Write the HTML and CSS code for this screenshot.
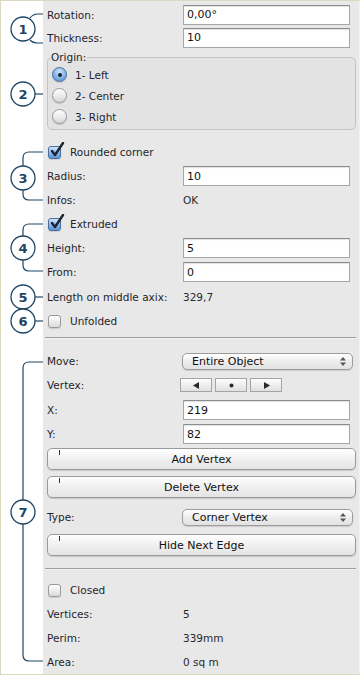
FILE: index.html
```html
<!DOCTYPE html>
<html lang="en">
<head>
  <meta charset="UTF-8">
  <title>Shape Properties</title>
  <link rel="stylesheet" href="styles.css">
</head>
<body>
  <div class="frame">
    <svg class="callouts" width="42" height="673" viewBox="0 0 42 673">
      <g class="lines">
        <path d="M29 17 Q32 13 37 13 H44"/>
        <path d="M29 39 Q32 42 37 42 H44"/>
        <path d="M34 93 H44"/>
        <path d="M44 151 H28 Q22 151 22 157 V165"/>
        <path d="M22 189 V193 Q22 199 28 199 H44"/>
        <path d="M44 223 H28 Q22 223 22 229 V235"/>
        <path d="M22 259 V264 Q22 270 28 270 H44"/>
        <path d="M34 296 H44"/>
        <path d="M34 320 H44"/>
        <path d="M44 361 H28 Q22 361 22 367 V499"/>
        <path d="M22 523 V654 Q22 660 28 660 H44"/>
      </g>
      <g class="bubbles">
        <circle cx="22" cy="28" r="12"/>
        <circle cx="22" cy="93" r="12"/>
        <circle cx="22" cy="177" r="12"/>
        <circle cx="22" cy="247" r="12"/>
        <circle cx="22" cy="296" r="12"/>
        <circle cx="22" cy="320" r="12"/>
        <circle cx="22" cy="511" r="12"/>
      </g>
      <g class="nums">
        <text x="22" y="33">1</text>
        <text x="22" y="98">2</text>
        <text x="22" y="182">3</text>
        <text x="22" y="252">4</text>
        <text x="22" y="301">5</text>
        <text x="22" y="325">6</text>
        <text x="22" y="516">7</text>
      </g>
    </svg>

    <div class="panel">
      <div class="row short"><span class="label">Rotation:</span><input class="field" value="0,00°"></div>
      <div class="row short"><span class="label">Thickness:</span><input class="field" value="10"></div>

      <fieldset class="group">
        <legend>Origin:</legend>
        <div class="radio-row"><span class="radio on"></span>1- Left</div>
        <div class="radio-row"><span class="radio"></span>2- Center</div>
        <div class="radio-row"><span class="radio"></span>3- Right</div>
      </fieldset>

      <div class="row check-row first"><span class="box on"><svg width="17" height="17" viewBox="0 0 17 17"><path d="M4 9 L7 13 L15 1"/></svg></span>Rounded corner</div>
      <div class="row"><span class="label">Radius:</span><input class="field" value="10"></div>
      <div class="row"><span class="label">Infos:</span><span class="value">OK</span></div>
      <div class="row check-row"><span class="box on"><svg width="17" height="17" viewBox="0 0 17 17"><path d="M4 9 L7 13 L15 1"/></svg></span>Extruded</div>
      <div class="row"><span class="label">Height:</span><input class="field" value="5"></div>
      <div class="row"><span class="label">From:</span><input class="field" value="0"></div>
      <div class="row gap1"><span class="label">Length on middle axix:</span><span class="value">329,7</span></div>
      <div class="row check-row"><span class="box"></span>Unfolded</div>

      <hr class="sep sep-a">

      <div class="row"><span class="label">Move:</span>
        <div class="popup">Entire Object<svg class="updown" width="6" height="9" viewBox="0 0 6 9"><path d="M0 3.5 L3 0 L6 3.5Z M0 5.5 L3 9 L6 5.5Z"/></svg></div>
      </div>
      <div class="row"><span class="label">Vertex:</span>
        <div class="steppers">
          <span class="step"><svg width="7" height="7" viewBox="0 0 7 7"><path d="M6 0 V7 L0 3.5Z"/></svg></span>
          <span class="step"><svg width="5" height="5" viewBox="0 0 5 5"><circle cx="2.5" cy="2.5" r="2"/></svg></span>
          <span class="step"><svg width="7" height="7" viewBox="0 0 7 7"><path d="M1 0 V7 L7 3.5Z"/></svg></span>
        </div>
      </div>
      <div class="row gap1"><span class="label">X:</span><input class="field" value="219"></div>
      <div class="row"><span class="label">Y:</span><input class="field" value="82"></div>

      <button class="push add">Add Vertex</button>
      <button class="push del">Delete Vertex</button>

      <div class="row type-row"><span class="label">Type:</span>
        <div class="popup">Corner Vertex<svg class="updown" width="6" height="9" viewBox="0 0 6 9"><path d="M0 3.5 L3 0 L6 3.5Z M0 5.5 L3 9 L6 5.5Z"/></svg></div>
      </div>
      <button class="push hide">Hide Next Edge</button>

      <hr class="sep sep-b">

      <div class="row check-row closed"><span class="box"></span>Closed</div>
      <div class="row"><span class="label">Vertices:</span><span class="value">5</span></div>
      <div class="row"><span class="label">Perim:</span><span class="value">339mm</span></div>
      <div class="row"><span class="label">Area:</span><span class="value">0 sq m</span></div>
    </div>
  </div>
</body>
</html>
```

FILE: styles.css
```css
body { margin: 0; background: #fff; font-family: "DejaVu Sans", Verdana, sans-serif; font-size: 10.5px; color: #1f1f2c; }

.frame { display: flex; width: 360px; height: 675px; box-sizing: border-box; border: 1px solid #ddd9bd; background: #fff; }

.callouts { flex: none; display: block; }
.callouts .lines path { fill: none; stroke: #1d4664; stroke-width: 1.2; }
.callouts .bubbles circle { fill: #fff; stroke: #1d4664; stroke-width: 1.3; }
.callouts .nums text { fill: #1d4664; font-family: "DejaVu Sans", sans-serif; font-weight: bold; font-size: 13px; text-anchor: middle; }

.panel { flex: 1; background: #e8e8e8; padding: 2px 3px 0 4px; border-right: 1px solid #f2f2f2; }

.row { display: flex; align-items: center; height: 24px; }
.row.short { height: 23px; }
.row.gap1 { margin-top: 1px; }
.label { width: 136px; flex: none; }
.value { color: #2a2a2a; }

.field { width: 167px; height: 20px; box-sizing: border-box; margin: 0; padding: 0 3px; border: 1px solid #a6a6a6; border-top-color: #8c8c8c; box-shadow: inset 0 1px 1px rgba(0,0,0,0.12); background: #fff; font-family: "DejaVu Sans", sans-serif; font-size: 11px; color: #111; outline: none; }

.group { margin: 1px 0 0; padding: 0 0 2px 4px; border: 1px solid #c4c4c4; border-radius: 5px; background: #e3e3e3; }
.group legend { padding: 0 1px; margin-left: -2px; line-height: 14px; }
.radio-row { display: flex; align-items: center; height: 21px; }
.radio { width: 15px; height: 15px; box-sizing: border-box; margin-right: 8px; border-radius: 50%; border: 1px solid #9a9a9a; background: linear-gradient(#ffffff, #d8d8d8); box-shadow: 0 1px 1px rgba(0,0,0,0.15); position: relative; }
.radio.on { border-color: #4a6c9c; background: radial-gradient(circle at 50% 30%, #cfe4fb, #7aaee6 60%, #4f8ad0); }
.radio.on::after { content: ""; position: absolute; left: 4.5px; top: 4.5px; width: 4px; height: 4px; border-radius: 50%; background: #1a2233; }

.check-row { padding-left: 1px; }
.check-row.first { margin-top: 10px; }
.box { width: 13px; height: 13px; box-sizing: border-box; margin-right: 9px; border: 1px solid #9a9a9a; border-radius: 3px; background: linear-gradient(#ffffff, #dadada); box-shadow: 0 1px 1px rgba(0,0,0,0.12); position: relative; }
.box.on { border-color: #4a6c9c; background: linear-gradient(#d2e6fb, #86b6ea 55%, #5d95d6); }
.box svg { position: absolute; left: -1px; top: -5px; }
.box svg path { fill: none; stroke: #1c2433; stroke-width: 2.4; stroke-linecap: round; stroke-linejoin: round; }

.sep { margin: 0 0 0 -2px; height: 0; border: 0; border-top: 1px solid #9d9d9d; border-bottom: 1px solid #f3f3f3; }
.sep-a { margin-top: 4px; margin-bottom: 10px; }
.sep-b { margin-top: 12px; margin-bottom: 8px; }

.popup { display: flex; align-items: center; justify-content: space-between; width: 171px; height: 17px; box-sizing: border-box; margin-left: -1px; padding: 0 6px 0 9px; border: 1px solid #9c9c9c; border-radius: 5px; background: linear-gradient(#ffffff, #ececec 55%, #e2e2e2); box-shadow: 0 1px 1px rgba(0,0,0,0.12); font-size: 11px; color: #111; }
.updown path { fill: #555; }

.steppers { display: flex; gap: 3px; margin-left: -3px; }
.step { display: flex; align-items: center; justify-content: center; width: 32px; height: 14px; box-sizing: border-box; border: 1px solid #a4a4a4; background: linear-gradient(#fdfdfd, #e0e0e0); }
.step svg path, .step svg circle { fill: #2a2a2a; }

.push { display: block; position: relative; width: 309px; height: 22px; margin: 0; padding: 0; border: 1px solid #9a9a9a; border-radius: 5px; background: linear-gradient(#ffffff, #f0f0f0 50%, #e4e4e4); box-shadow: 0 1px 1px rgba(0,0,0,0.15); font-family: "DejaVu Sans", sans-serif; font-size: 11px; color: #111; }
.push::before { content: ""; position: absolute; left: 11px; top: 1px; width: 1px; height: 5px; background: #333; }
.push.add { margin-top: 2px; }
.push.del { margin-top: 6px; }
.push.hide { margin-top: 5px; }
.type-row { margin-top: 7px; }
```
